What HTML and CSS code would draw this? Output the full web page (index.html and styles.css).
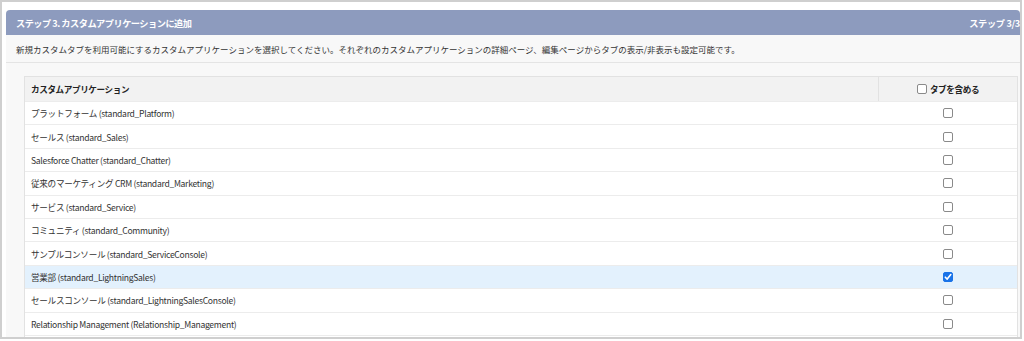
FILE: index.html
```html
<!DOCTYPE html>
<html lang="ja">
<head>
<meta charset="utf-8">
<link rel="stylesheet" href="styles.css">
</head>
<body>
<div class="frame">
  <div class="page">
    <div class="panel">
      <div class="panel-head">
        <span class="title">ステップ 3. カスタムアプリケーションに追加</span>
        <span class="step">ステップ 3/3</span>
      </div>
      <div class="desc">新規カスタムタブを利用可能にするカスタムアプリケーションを選択してください。それぞれのカスタムアプリケーションの詳細ページ、編集ページからタブの表示/非表示も設定可能です。</div>
      <div class="body">
        <div class="table">
          <div class="row head">
            <div class="c-name">カスタムアプリケーション</div>
            <div class="c-check"><span class="cb"></span><span>タブを含める</span></div>
          </div>
          <div class="row"><div class="c-name">プラットフォーム (standard_Platform)</div><div class="c-check"><span class="cb"></span></div></div>
          <div class="row"><div class="c-name">セールス (standard_Sales)</div><div class="c-check"><span class="cb"></span></div></div>
          <div class="row"><div class="c-name">Salesforce Chatter (standard_Chatter)</div><div class="c-check"><span class="cb"></span></div></div>
          <div class="row"><div class="c-name">従来のマーケティング CRM (standard_Marketing)</div><div class="c-check"><span class="cb"></span></div></div>
          <div class="row"><div class="c-name">サービス (standard_Service)</div><div class="c-check"><span class="cb"></span></div></div>
          <div class="row"><div class="c-name">コミュニティ (standard_Community)</div><div class="c-check"><span class="cb"></span></div></div>
          <div class="row"><div class="c-name">サンプルコンソール (standard_ServiceConsole)</div><div class="c-check"><span class="cb"></span></div></div>
          <div class="row selected"><div class="c-name">営業部 (standard_LightningSales)</div><div class="c-check"><span class="cb checked"><svg viewBox="0 0 10 10" width="10" height="10"><path d="M2.3 5.2 L4.2 7.1 L7.8 2.6" fill="none" stroke="#fff" stroke-width="1.6" stroke-linecap="round" stroke-linejoin="round"/></svg></span></div></div>
          <div class="row"><div class="c-name">セールスコンソール (standard_LightningSalesConsole)</div><div class="c-check"><span class="cb"></span></div></div>
          <div class="row"><div class="c-name">Relationship Management (Relationship_Management)</div><div class="c-check"><span class="cb"></span></div></div>
          <div class="row"><div class="c-name">&nbsp;</div><div class="c-check"></div></div>
        </div>
      </div>
    </div>
  </div>
</div>
</body>
</html>
```

FILE: styles.css
```css
html, body {
  margin: 0;
  padding: 0;
  background: #ffffff;
}
body {
  width: 1024px;
  height: 341px;
  overflow: hidden;
  font-family: "Noto Sans CJK JP", "Noto Sans", sans-serif;
  color: #333333;
}
.frame {
  width: 1018px;
  height: 335px;
  border: 2px solid #cfcfcf;
  overflow: hidden;
  background: #ffffff;
}
.page {
  padding: 8px 0 0 4px;
  height: 100%;
  box-sizing: border-box;
}
.panel {
  width: 1014px;
  height: 100%;
  background: #f8f8f8;
  border-radius: 4px 4px 0 0;
  overflow: hidden;
}
.panel-head {
  height: 25px;
  background: #8d9bbe;
  color: #ffffff;
  display: flex;
  align-items: center;
  justify-content: space-between;
  padding: 0 0 0 10px;
  font-weight: bold;
  font-size: 9.2px;
}
.title {
  letter-spacing: -0.5px;
}
.step {
  letter-spacing: -0.3px;
  white-space: nowrap;
}
.desc {
  height: 28px;
  box-sizing: border-box;
  padding-left: 10px;
  font-size: 8.5px;
  line-height: 28px;
  color: #333;
  border-bottom: 1px solid #e4e4e4;
  white-space: nowrap;
}
.body {
  padding: 13px 0 0 18px;
}
.table {
  width: 992px;
  border: 1px solid #e2e2e2;
  background: #ffffff;
}
.row {
  display: flex;
  height: 23.4px;
  align-items: center;
  border-top: 1px solid #ececec;
  box-sizing: border-box;
  font-size: 8.6px;
  letter-spacing: -0.3px;
}
.row.head {
  height: 24px;
  border-top: none;
  background: #f2f2f2;
  font-weight: bold;
  color: #222;
  letter-spacing: -0.4px;
}
.row.selected {
  background: #e3f1fd;
}
.c-name {
  flex: 1;
  padding-left: 6px;
  height: 100%;
  display: flex;
  align-items: center;
  white-space: nowrap;
}
.c-check {
  width: 139px;
  height: 100%;
  display: flex;
  align-items: center;
  justify-content: center;
  gap: 3px;
}
.row.head .c-check {
  border-left: 1px solid #e2e2e2;
  box-sizing: border-box;
}
.cb {
  display: inline-block;
  width: 10px;
  height: 10px;
  box-sizing: border-box;
  border: 1px solid #8a8a8a;
  border-radius: 2px;
  background: #fff;
}
.cb.checked {
  background: #1a73e8;
  border-color: #1a73e8;
  position: relative;
}
.cb.checked svg {
  position: absolute;
  left: -1px;
  top: -1px;
}
```
